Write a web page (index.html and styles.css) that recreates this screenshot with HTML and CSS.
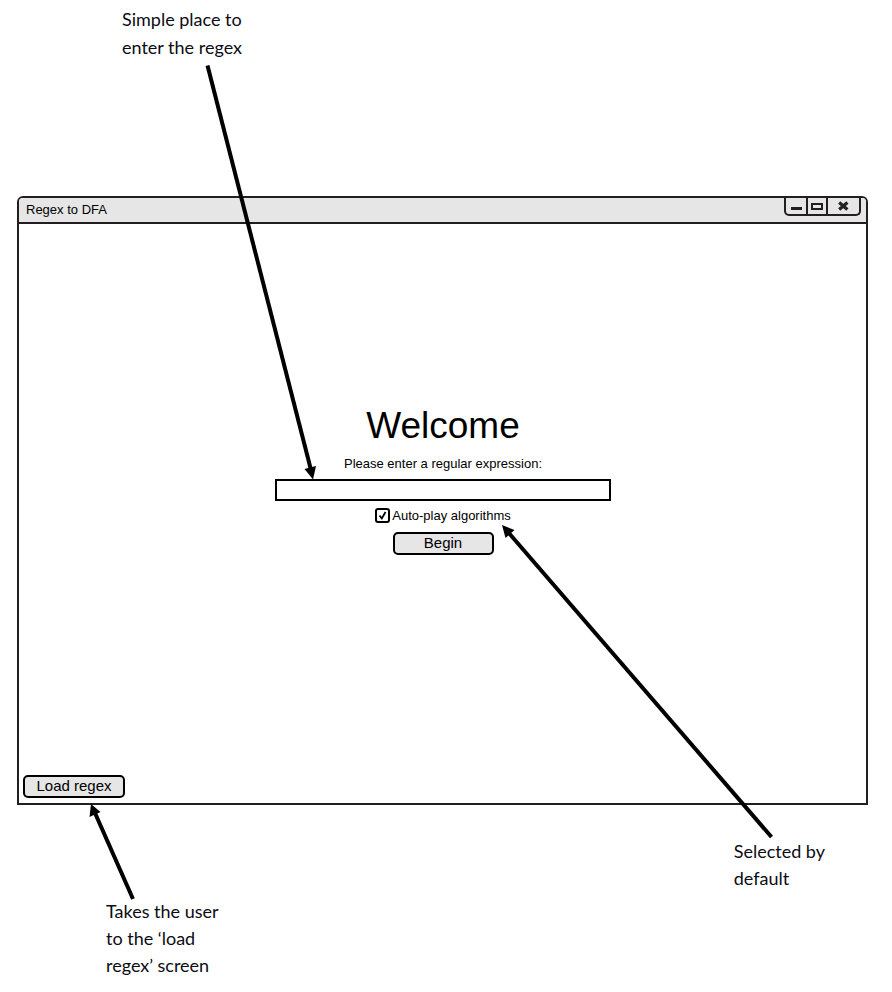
FILE: index.html
```html
<!DOCTYPE html>
<html lang="en">
<head>
<meta charset="utf-8">
<meta name="viewport" content="width=device-width, initial-scale=1">
<title>Regex to DFA</title>
<link rel="stylesheet" href="styles.css">
</head>
<body>
<main class="figure">
  <div class="notes notes-top">
    <p class="note">Simple place to<br>enter the regex</p>
  </div>

  <section class="window">
    <header class="titlebar">
      <span class="title">Regex to DFA</span>
      <div class="controls">
        <button class="control" type="button" aria-label="Minimize">
          <svg width="20" height="16" viewBox="0 0 20 16"><path d="M5 10.5h11" stroke="#231f20" stroke-width="3"/></svg>
        </button>
        <button class="control" type="button" aria-label="Maximize">
          <svg width="18" height="16" viewBox="0 0 18 16"><rect x="4" y="6" width="10" height="5" fill="none" stroke="#231f20" stroke-width="2"/></svg>
        </button>
        <button class="control" type="button" aria-label="Close">
          <svg width="31" height="16" viewBox="0 0 31 16"><path d="M11.2 4.5l8.2 7M19.4 4.5l-8.2 7" stroke="#231f20" stroke-width="3.2"/></svg>
        </button>
      </div>
    </header>
    <form class="content">
      <div class="welcome">
        <h1>Welcome</h1>
        <label class="prompt" for="regex">Please enter a regular expression:</label>
        <input class="regex" id="regex" type="text">
        <label class="autoplay"><input class="check" type="checkbox" checked>Auto-play algorithms</label>
        <button class="button" type="button">Begin</button>
      </div>
      <button class="button load" type="button">Load regex</button>
    </form>
  </section>

  <div class="notes notes-bottom">
    <p class="note">Takes the user<br>to the ‘load<br>regex’ screen</p>
    <p class="note note-default">Selected by<br>default</p>
  </div>

  <svg class="arrows" viewBox="0 0 892 992" preserveAspectRatio="none" aria-hidden="true">
    <g stroke="#000" stroke-width="4">
      <path d="M207.5 65.5L311 470"/>
      <path d="M771.5 837L508 532"/>
      <path d="M133 899L95 813"/>
    </g>
    <path d="M313 479.500L304.500 469L316 466Z"/>
    <path d="M502 525L514.500 530L505.500 538Z"/>
    <path d="M91 804L100.500 812L89.500 817Z"/>
  </svg>
</main>
</body>
</html>
```
FILE: styles.css
```css
* {
  box-sizing: border-box;
}

body {
  margin: 0;
  background: #fff;
  color: #000;
  font-family: "Liberation Sans", Arial, sans-serif;
}

.figure {
  position: relative;
  display: flex;
  flex-direction: column;
  min-height: 100vh;
  padding: 5px 24px 0 17px;
}

.notes {
  display: flex;
}

.notes-top {
  height: 191px;
  padding-left: 105px;
}

.notes-bottom {
  justify-content: space-between;
  align-items: flex-start;
  padding: 33px 43px 10px 89px;
}

.note {
  margin: 0;
  color: #0c0c14;
  font: 18px/28px Lato, Carlito, sans-serif;
}

.notes-bottom .note {
  line-height: 27px;
  padding-top: 60px;
}

.notes-bottom .note-default {
  padding-top: 0;
}

.window {
  display: flex;
  flex-direction: column;
  min-height: 609px;
  border: 2px solid #231f20;
  border-radius: 6px 6px 0 0;
}

.titlebar {
  display: flex;
  justify-content: space-between;
  height: 26px;
  padding: 0 5px 0 7px;
  background: #e6e6e6;
  border-bottom: 2px solid #231f20;
  border-radius: 4px 4px 0 0;
}

.title {
  font-size: 13px;
  line-height: 23px;
}

.controls {
  display: flex;
  height: 18px;
  border: 2px solid #231f20;
  border-top: 0;
  border-radius: 0 0 5px 5px;
}

.control {
  display: flex;
  padding: 0;
  border: 0;
  background: none;
}

.control + .control {
  border-left: 2px solid #231f20;
}

.content {
  display: flex;
  flex: 1;
  flex-direction: column;
  padding: 0 4px 5px;
}

.welcome {
  display: flex;
  flex: 1;
  flex-direction: column;
  align-items: center;
  justify-content: center;
  padding: 0 0 41px 1px;
}

h1 {
  margin: 0 0 8px;
  font-size: 37px;
  font-weight: 400;
  line-height: 44px;
}

.prompt {
  font-size: 13px;
  line-height: 16px;
}

.regex {
  width: 336px;
  max-width: 100%;
  height: 22px;
  margin: 7px 0;
  padding: 0 4px;
  border: 2px solid #000;
  border-radius: 0;
  background: #fff;
  font: inherit;
  font-size: 13px;
}

.autoplay {
  display: flex;
  align-items: center;
  gap: 2px;
  margin-bottom: 8px;
  font-size: 13px;
  line-height: 16px;
}

.check {
  appearance: none;
  width: 15px;
  height: 15px;
  margin: 0;
  border: 2px solid #000;
  border-radius: 3px;
  background: #fff url("data:image/svg+xml,%3Csvg xmlns='http://www.w3.org/2000/svg' viewBox='0 0 11 11'%3E%3Cpath d='M2.5 5.5L4.8 8.5L8.5 2' fill='none' stroke='%23000' stroke-width='1.8'/%3E%3C/svg%3E") center / 11px 11px no-repeat;
}

.check:not(:checked) {
  background-image: none;
}

.button {
  width: 101px;
  height: 23px;
  padding: 0 0 2px;
  border: 2px solid #000;
  border-radius: 5px;
  background: #e6e6e6;
  color: #000;
  font: 15px/17px "Liberation Sans", Arial, sans-serif;
}

.load {
  width: 102px;
}

.arrows {
  position: absolute;
  inset: 0;
  width: 100%;
  height: 100%;
  pointer-events: none;
}
```
